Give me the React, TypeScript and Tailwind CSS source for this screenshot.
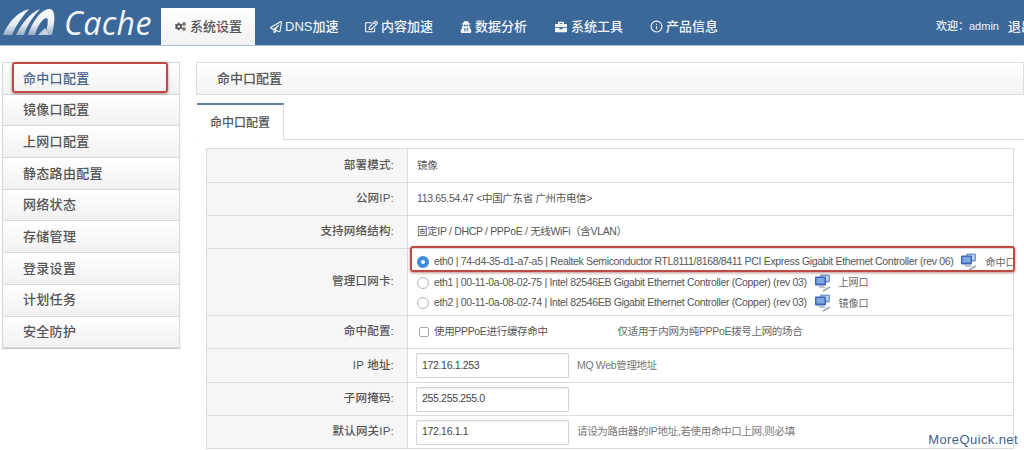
import { ReactNode } from 'react'
import { FaCogs, FaRegPaperPlane, FaRegEdit, FaBriefcase, FaUserSecret } from 'react-icons/fa'
import { FiInfo } from 'react-icons/fi'

const CJK = '[font-family:"Liberation_Sans","Noto_Sans_CJK_SC",sans-serif]'

const navItems = [
  { label: 'DNS加速', icon: <FaRegPaperPlane className="text-[12px] mr-[3px]" /> },
  { label: '内容加速', icon: <FaRegEdit className="text-[13px] mr-[3px]" /> },
  { label: '数据分析', icon: <FaUserSecret className="text-[12px] mr-[3px]" /> },
  { label: '系统工具', icon: <FaBriefcase className="text-[12px] mr-[4px]" /> },
  { label: '产品信息', icon: <FiInfo className="text-[13px] mr-[3px]" /> },
]

const sideItems = ['命中口配置', '镜像口配置', '上网口配置', '静态路由配置', '网络状态', '存储管理', '登录设置', '计划任务', '安全防护']

function Logo() {
  return (
    <div className="w-[161px] h-[46px] flex items-center shrink-0 self-start">
      <svg width="60" height="38" viewBox="0 0 60 38" className="shrink-0 mt-[2px]">
        <defs>
          <linearGradient id="swoosh" x1="0" y1="0" x2="0" y2="1">
            <stop offset="0" stopColor="#ffffff" />
            <stop offset="0.6" stopColor="#e6ebf1" />
            <stop offset="1" stopColor="#97abc2" />
          </linearGradient>
        </defs>
        <path d="M3 30 C8 18 16 8 29 4 C22 12 16 20 12 30 Z" fill="url(#swoosh)" />
        <path d="M16 30 C22 18 30 8 40 4 C33 12 27 20 24 30 Z" fill="url(#swoosh)" />
        <path d="M28 30 C32 18 40 5 49 4 C55 4 56 12 52 30 L45 30 C48 20 49 13 46 13 C42 14 37 22 35 30 Z" fill="url(#swoosh)" />
        <path d="M38 30 L45 23 L49 30 Z" fill="#c9d3de" />
      </svg>
      <span className="ml-[4px] text-[32px] leading-none italic font-medium text-[#f2f6fa] tracking-[0.4px] [font-family:'Open_Sans',sans-serif]">Cache</span>
    </div>
  )
}

function Header() {
  return (
    <header className={`h-[46px] bg-[#3c6899] border-b border-[#a9c3d8] flex items-end ${CJK}`}>
      <Logo />
      <nav className="flex h-[37px]">
        <div className="w-[94px] flex items-center pl-[14px] bg-gradient-to-b from-white to-[#f1f1f1] text-[#555] text-[13px] font-medium">
          <FaCogs className="text-[11px] mr-[4px] text-[#555]" />
          系统设置
        </div>
        <div className="flex pl-[15px]">
          {navItems.map((item) => (
            <div key={item.label} className="w-[95px] flex items-center text-[#f2f5f8] text-[13px] font-medium">
              {item.icon}
              {item.label}
            </div>
          ))}
        </div>
      </nav>
      <div className="ml-auto h-[37px] flex items-center text-[11px] text-[#eef2f6] font-medium whitespace-nowrap w-[88px] overflow-hidden shrink-0">
        <span>欢迎：admin</span>
        <span className="ml-[9px] text-[13px]">退出</span>
      </div>
    </header>
  )
}

function Sidebar() {
  return (
    <aside className="w-[178px] ml-[2px] shrink-0 border-t border-l border-r border-[#dcdcdc] self-start shadow-[0_1px_1px_#ccc]">
      {sideItems.map((label, i) => (
        <div
          key={label}
          className={`relative h-[31.7px] pl-[20px] flex items-center text-[13px] font-medium tracking-[0.3px] border-b border-[#d8d8d8] bg-gradient-to-b from-white to-[#f1f1f1] ${i === 0 ? 'text-[#4a6590]' : 'text-[#555]'}`}
        >
          {label}
          {i === 0 && (
            <div className="absolute left-[9px] top-[-1px] w-[156px] h-[31px] rounded-[3px] border-[2px] border-[#bf4a45] shadow-[0_1px_3px_rgba(120,30,30,0.5)]" />
          )}
        </div>
      ))}
    </aside>
  )
}

function NetIcon() {
  return (
    <svg width="18" height="18" viewBox="0 0 18 18" className="shrink-0">
      <rect x="6" y="0.5" width="10" height="8" rx="1" fill="#7d9ad0" />
      <rect x="7.5" y="2" width="7" height="4.5" fill="#bcd3f0" />
      <rect x="1" y="2.5" width="11" height="9" rx="1" fill="#3f66b5" />
      <rect x="2.5" y="4" width="8" height="5.5" fill="#7fa8e6" />
      <path d="M4 12 L10 12 L12 14 L6 14 Z" fill="#b9c3cf" />
      <path d="M9 17 L16 13" stroke="#9aa6b3" strokeWidth="1.5" fill="none" />
    </svg>
  )
}

function Radio({ checked }: { checked?: boolean }) {
  return checked ? (
    <span className="w-[12px] h-[12px] rounded-full bg-[#3f8be0] flex items-center justify-center shrink-0">
      <span className="w-[4px] h-[4px] rounded-full bg-white" />
    </span>
  ) : (
    <span className="w-[12px] h-[12px] rounded-full border border-[#b5b5b5] bg-white shrink-0" />
  )
}

function NicLine({ checked, text, tag }: { checked?: boolean; text: string; tag: string }) {
  return (
    <div className="h-[20.5px] flex items-center whitespace-nowrap">
      <Radio checked={checked} />
      <span className="ml-[5px]">{text}</span>
      <span className="ml-[7px]"><NetIcon /></span>
      <span className="ml-[7px] text-[#666] tracking-normal text-[10px]">{tag}</span>
    </div>
  )
}

function Row({ label, height, children }: { label: string; height: string; children: ReactNode }) {
  return (
    <div className={`flex border-b border-[#dcdcdc] ${height}`}>
      <div className="w-[201px] shrink-0 bg-[#f6f6f6] border-r border-[#dcdcdc] flex items-center justify-end pr-[13px] text-[11.5px] font-medium text-[#555] tracking-[0.2px]">
        {label}:
      </div>
      <div className="flex-1 min-w-0 pl-[9px] flex items-center text-[10.5px] tracking-[-0.33px] text-[#555]">{children}</div>
    </div>
  )
}

function TextField({ value }: { value: string }) {
  return (
    <div className="w-[153px] h-[25px] -ml-[1px] border border-[#d6d6d6] rounded-[1px] flex items-center pl-[5px] text-[#444] bg-white shadow-[inset_0_1px_1px_#f0f0f0] shrink-0">
      {value}
    </div>
  )
}

function ConfigTable() {
  return (
    <div className="relative ml-[10px] mt-[8px] w-[808px] border-t border-l border-r border-[#dcdcdc]">
      <Row label="部署模式" height="h-[34px]">镜像</Row>
      <Row label="公网IP" height="h-[33px]">113.65.54.47 &lt;中国广东省 广州市电信&gt;</Row>
      <Row label="支持网络结构" height="h-[33px]">固定IP / DHCP / PPPoE / 无线WiFi（含VLAN）</Row>
      <Row label="管理口网卡" height="h-[67px]">
        <div className="flex flex-col pt-[1px]">
          <NicLine checked text="eth0 | 74-d4-35-d1-a7-a5 | Realtek Semiconductor RTL8111/8168/8411 PCI Express Gigabit Ethernet Controller (rev 06)" tag="命中口" />
          <NicLine text="eth1 | 00-11-0a-08-02-75 | Intel 82546EB Gigabit Ethernet Controller (Copper) (rev 03)" tag="上网口" />
          <NicLine text="eth2 | 00-11-0a-08-02-74 | Intel 82546EB Gigabit Ethernet Controller (Copper) (rev 03)" tag="镜像口" />
        </div>
      </Row>
      <Row label="命中配置" height="h-[33px]">
        <span className="w-[10px] h-[10px] border border-[#aaa] rounded-[2px] bg-white ml-[2px] mr-[5px] shrink-0" />
        <span>使用PPPoE进行缓存命中</span>
        <span className="ml-[70px] text-[#666]">仅适用于内网为纯PPPoE拨号上网的场合</span>
      </Row>
      <Row label="IP 地址" height="h-[34px]">
        <TextField value="172.16.1.253" />
        <span className="ml-[8px] text-[#777]">MQ Web管理地址</span>
      </Row>
      <Row label="子网掩码" height="h-[33px]">
        <TextField value="255.255.255.0" />
      </Row>
      <Row label="默认网关IP" height="h-[33px]">
        <TextField value="172.16.1.1" />
        <span className="ml-[8px] text-[#777]">请设为路由器的IP地址,若使用命中口上网,则必填</span>
      </Row>
      {/* red callout round the eth0 line */}
      <div className="absolute left-[203px] top-[97px] w-[605px] h-[26px] rounded-[3px] border-[2px] border-[#bf4a45] shadow-[0_1px_3px_rgba(120,30,30,0.5)]" />
    </div>
  )
}

function Main() {
  return (
    <main className="ml-[16px] flex-1 min-w-0">
      <div className="h-[33px] border border-[#dedede] bg-gradient-to-b from-white to-[#f2f2f2] flex items-center pl-[20px] text-[13px] font-medium text-[#555]">
        命中口配置
      </div>
      <div className="mt-[8px] h-[37px] border-b border-[#dcdcdc] flex pl-[1px]">
        <div className="w-[87px] h-[37px] border-t-[2px] border-t-[#5b7f9c] border-r border-r-[#dcdcdc] bg-white flex items-center justify-center text-[12px] font-medium text-[#555]">
          命中口配置
        </div>
      </div>
      <ConfigTable />
    </main>
  )
}

export default function App() {
  return (
    <div className={`relative w-[1024px] h-[450px] overflow-hidden bg-white ${CJK}`}>
      <Header />
      <div className="flex pt-[16px]">
        <Sidebar />
        <Main />
      </div>
      <div className="absolute right-[6px] bottom-[1px] text-[13px] text-[#3f5f8a] tracking-[0.4px] [font-family:'Liberation_Sans',sans-serif]">MoreQuick.net</div>
    </div>
  )
}
